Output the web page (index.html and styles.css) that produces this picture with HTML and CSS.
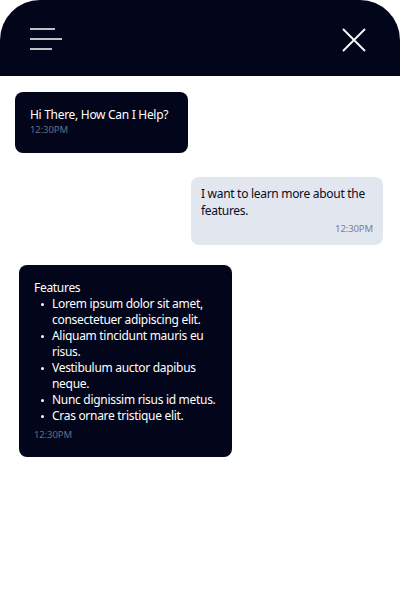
FILE: index.html
```html
<!DOCTYPE html>
<html>
<head>
<meta charset="utf-8">
<link rel="stylesheet" href="styles.css">
</head>
<body>
<div class="app">
  <header class="header">
    <svg class="icon-menu" width="34" height="24" viewBox="0 0 34 24">
      <path d="M0 1H25M0 11H32M0 21H22" stroke="#fff" stroke-width="1.6" fill="none"/>
    </svg>
    <svg class="icon-close" width="24" height="24" viewBox="0 0 24 24">
      <path d="M1 1L23 23M23 1L1 23" stroke="#fff" stroke-width="1.8" fill="none"/>
    </svg>
  </header>
  <main class="chat">
    <div class="msg bot first">
      <div class="text">Hi There, How Can I Help?</div>
      <div class="time">12:30PM</div>
    </div>
    <div class="msg user">
      <div class="text">I want to learn more about the<br>features.</div>
      <div class="time">12:30PM</div>
    </div>
    <div class="msg bot list">
      <div class="text">Features</div>
      <ul class="items">
        <li>Lorem ipsum dolor sit amet,<br>consectetuer adipiscing elit.</li>
        <li>Aliquam tincidunt mauris eu<br>risus.</li>
        <li>Vestibulum auctor dapibus<br>neque.</li>
        <li>Nunc dignissim risus id metus.</li>
        <li>Cras ornare tristique elit.</li>
      </ul>
      <div class="time">12:30PM</div>
    </div>
  </main>
</div>
</body>
</html>
```
FILE: styles.css
```css
* { box-sizing: border-box; }
html, body { margin: 0; padding: 0; background: #fff; }
body { font-family: "Noto Sans", "Open Sans", sans-serif; font-size: 12px; line-height: 16px; letter-spacing: -0.3px; }
.app { width: 400px; height: 600px; background: #fff; }
.header {
  height: 76px;
  background: #03061a;
  border-radius: 40px 40px 0 0;
  display: flex;
  align-items: center;
  justify-content: space-between;
  padding: 0 34px 0 30px;
}
.icon-menu { display: block; margin-top: 4px; }
.icon-close { display: block; margin-top: 4px; }
.chat { display: flex; flex-direction: column; padding: 16px 17px 0 15px; }
.msg { border-radius: 8px; white-space: nowrap; }
.bot { background: #03061a; color: #fff; align-self: flex-start; }
.user { background: #e1e6ef; color: #0a0d1f; align-self: flex-end; }
.first { padding: 15px 15px 16px 15px; width: 173px; }
.user { margin-top: 24px; padding: 8px 10px 9px 10px; width: 192px; line-height: 17px; }
.list { margin-top: 20px; margin-left: 4px; padding: 15px 15px 15px 15px; width: 213px; }
.time { font-size: 9.5px; line-height: 14px; color: #656d87; letter-spacing: -0.1px; }
.user .time { text-align: right; margin-top: 3px; color: #7a8196; }
.first .time { margin-top: 0; }
.items { margin: 0; padding: 0 0 0 18px; list-style: none; }
.items li { position: relative; }
.items li::before {
  content: "";
  position: absolute;
  left: -11px;
  top: 7px;
  width: 3px;
  height: 3px;
  border-radius: 50%;
  background: #fff;
}
.list .time { margin-top: 4px; }
```
